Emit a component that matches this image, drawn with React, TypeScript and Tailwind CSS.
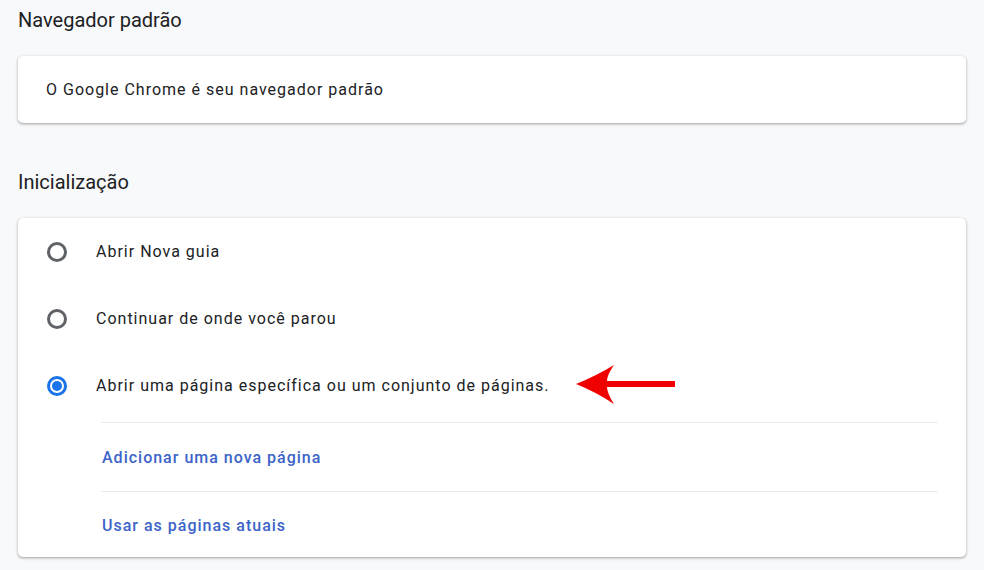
const RadioRow = ({ label, checked }: { label: string; checked?: boolean }) => (
  <div className="flex h-[67px] items-center pl-[29px]">
    {checked ? (
      <span className="flex h-[20px] w-[20px] items-center justify-center rounded-full border-[3px] border-[#1a73e8]">
        <span className="h-[10px] w-[10px] rounded-full bg-[#1a73e8]" />
      </span>
    ) : (
      <span className="h-[20px] w-[20px] rounded-full border-[3px] border-[#5f6368]" />
    )}
    <span className="ml-[29px] text-[16px] tracking-[1px] text-[#202124]">{label}</span>
    {checked && (
      <svg width="100" height="42" viewBox="0 0 100 42" className="ml-[26px] mt-[-2px]">
        <path
          d="M0 20 Q20 12 38 1 Q31 11 31 17 L99 17 L99 23 L31 23 Q31 29 38 40 Q20 28 0 20 Z"
          fill="#f00000"
        />
      </svg>
    )}
  </div>
);

const App = () => {
  return (
    <div
      className="min-h-[570px] w-[984px] bg-[#f8f9fa] px-[18px] pt-[6px]"
      style={{ fontFamily: "Roboto, 'Liberation Sans', sans-serif" }}
    >
      <div className="h-[28px] text-[20px] leading-[28px] text-[#202124]">Navegador padrão</div>

      <div className="mt-[22px] flex h-[67px] items-center rounded-[5px] bg-white pl-[28px] shadow-[0_1px_2px_rgba(60,64,67,0.3),0_1px_3px_1px_rgba(60,64,67,0.15)]">
        <span className="text-[16px] tracking-[1px] text-[#202124]">O Google Chrome é seu navegador padrão</span>
      </div>

      <div className="mt-[45px] h-[28px] text-[20px] leading-[28px] text-[#202124]">Inicialização</div>

      <div className="mt-[22px] rounded-[5px] bg-white shadow-[0_1px_2px_rgba(60,64,67,0.3),0_1px_3px_1px_rgba(60,64,67,0.15)]">
        <RadioRow label="Abrir Nova guia" />
        <RadioRow label="Continuar de onde você parou" />
        <RadioRow label="Abrir uma página específica ou um conjunto de páginas." checked />
        <div className="ml-[83px] mr-[28px] mt-[3px]">
          <div className="flex h-[69px] items-center border-t border-[#e8eaed] pl-px pt-[2px]">
            <span className="text-[16px] font-medium tracking-[1px] text-[#3c64c8]">Adicionar uma nova página</span>
          </div>
          <div className="flex h-[66px] items-center border-t border-[#e8eaed] pl-px pt-[2px]">
            <span className="text-[16px] font-medium tracking-[1px] text-[#3c64c8]">Usar as páginas atuais</span>
          </div>
        </div>
      </div>
    </div>
  );
};

export default App;
